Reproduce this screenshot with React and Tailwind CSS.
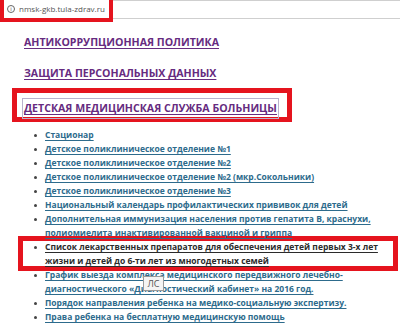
import React from 'react';

const links = [
  { lines: ['Стационар'] },
  { lines: ['Детское поликлиническое отделение №1'] },
  { lines: ['Детское поликлиническое отделение №2'] },
  { lines: ['Детское поликлиническое отделение №2 (мкр.Сокольники)'] },
  { lines: ['Детское поликлиническое отделение №3'] },
  { lines: ['Национальный календарь профилактических прививок для детей'] },
  { lines: ['Дополнительная иммунизация населения против гепатита В, краснухи,', 'полиомиелита инактивированной вакциной и гриппа'] },
];

const after = [
  { lines: ['График выезда комплекса медицинского передвижного лечебно-', 'диагностического «Диагностический кабинет» на 2016 год.'], tip: true },
  { lines: ['Порядок направления ребенка на медико-социальную экспертизу.'] },
  { lines: ['Права ребенка на бесплатную медицинскую помощь'] },
];

const Item = ({ lines, dark, tip }) => (
  <li className="relative flex items-start">
    <span className="w-[3px] h-[3px] rounded-full bg-[#444] mt-[6px] ml-[34px] mr-[8px] shrink-0" />
    <a className={`underline decoration-1 underline-offset-2 whitespace-nowrap ${dark ? 'text-[#2b2b2b]' : 'text-[#2d6b8c]'}`}>
      {lines.map((l, i) => (
        <span key={i} className="block">{l}</span>
      ))}
    </a>
    {tip && (
      <span className="absolute left-[143px] top-[8px] h-[15px] w-[21px] border border-[#9a9a9a] bg-[#f4f4f4] text-[9px] leading-[13px] text-[#555] font-normal text-center no-underline">
        ЛС
      </span>
    )}
  </li>
);

export default function App() {
  return (
    <div className="w-[400px] h-[331px] bg-white overflow-hidden font-['Open_Sans',sans-serif]">
      {/* address bar */}
      <div className="flex items-start">
        <div className="w-[113px] h-[22px] border-[4px] border-t-0 border-[#e5141e] bg-white flex items-center pl-[3px] gap-[4px] text-[8px] text-[#555] whitespace-nowrap">
          <span className="w-[8px] h-[8px] rounded-full border border-[#666] text-[6px] leading-[6px] flex items-center justify-center">i</span>
          <span>nmsk-gkb.tula-zdrav.ru</span>
        </div>
        <div className="flex-1 h-[19px] border-y border-[#cfcfcf]" />
      </div>

      <div className="pt-[11px] whitespace-nowrap">
        <h2 className="pl-[24px] h-[18px] leading-[18px] text-[10.6px] font-bold text-[#662b80] underline underline-offset-2">
          АНТИКОРРУПЦИОННАЯ ПОЛИТИКА
        </h2>
        <h2 className="mt-[13px] pl-[24px] h-[18px] leading-[18px] text-[10.6px] font-bold text-[#662b80] underline underline-offset-2">
          ЗАЩИТА ПЕРСОНАЛЬНЫХ ДАННЫХ
        </h2>

        <div className="mt-[6px] ml-[12px] w-[280px] h-[34px] border-[5px] border-[#e5141e] pl-[5px] pt-[1px]">
          <span className="inline-block border border-[#b9b2cc] px-[1px] h-[21px] leading-[19px] text-[10.6px] font-bold text-[#662b80] underline underline-offset-2">
            ДЕТСКАЯ МЕДИЦИНСКАЯ СЛУЖБА БОЛЬНИЦЫ
          </span>
        </div>

        <ul className="mt-[6px] text-[8.5px] leading-[14px] font-bold">
          {links.map((it, i) => (
            <Item key={i} {...it} />
          ))}
          <li className="ml-[18px] mr-[2px] -mt-[4px] -mb-[3px] border-[5px] border-[#e5141e]">
            <ul className="-mt-px -mb-[2px] -ml-[23px]">
              <Item dark lines={['Список лекарственных препаратов для обеспечения детей первых 3-х лет', 'жизни и детей до 6-ти лет из многодетных семей']} />
            </ul>
          </li>
          {after.map((it, i) => (
            <Item key={i} {...it} />
          ))}
        </ul>
      </div>
    </div>
  );
}
